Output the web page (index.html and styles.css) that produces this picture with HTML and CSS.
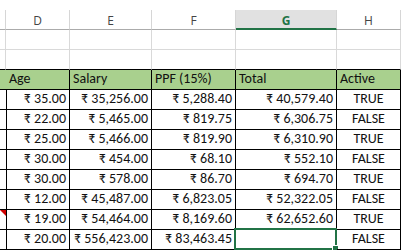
FILE: index.html
```html
<!DOCTYPE html>
<html>
<head>
<meta charset="utf-8">
<link rel="stylesheet" href="styles.css">
</head>
<body>
<div class="sheet">
  <div class="colhead"></div>
  <div class="colhead">D</div>
  <div class="colhead">E</div>
  <div class="colhead">F</div>
  <div class="colhead sel">G</div>
  <div class="colhead">H</div>

  <div class="grid"></div><div class="grid"></div><div class="grid"></div><div class="grid"></div><div class="grid"></div><div class="grid"></div>
  <div class="grid top"></div><div class="grid top"></div><div class="grid top"></div><div class="grid top"></div><div class="grid top"></div><div class="grid top"></div>

  <div class="th"></div><div class="th">Age</div><div class="th">Salary</div><div class="th">PPF (15%)</div><div class="th">Total</div><div class="th">Active</div>

  <div class="td"></div><div class="td num">₹ 35.00</div><div class="td num">₹ 35,256.00</div><div class="td num">₹ 5,288.40</div><div class="td num">₹ 40,579.40</div><div class="td bool">TRUE</div>
  <div class="td"></div><div class="td num">₹ 22.00</div><div class="td num">₹ 5,465.00</div><div class="td num">₹ 819.75</div><div class="td num">₹ 6,306.75</div><div class="td bool">FALSE</div>
  <div class="td"></div><div class="td num">₹ 25.00</div><div class="td num">₹ 5,466.00</div><div class="td num">₹ 819.90</div><div class="td num">₹ 6,310.90</div><div class="td bool">TRUE</div>
  <div class="td"></div><div class="td num">₹ 30.00</div><div class="td num">₹ 454.00</div><div class="td num">₹ 68.10</div><div class="td num">₹ 552.10</div><div class="td bool">FALSE</div>
  <div class="td"></div><div class="td num">₹ 30.00</div><div class="td num">₹ 578.00</div><div class="td num">₹ 86.70</div><div class="td num">₹ 694.70</div><div class="td bool">TRUE</div>
  <div class="td"></div><div class="td num">₹ 12.00</div><div class="td num">₹ 45,487.00</div><div class="td num">₹ 6,823.05</div><div class="td num">₹ 52,322.05</div><div class="td bool">FALSE</div>
  <div class="td"><span class="comment"></span></div><div class="td num">₹ 19.00</div><div class="td num">₹ 54,464.00</div><div class="td num">₹ 8,169.60</div><div class="td num">₹ 62,652.60</div><div class="td bool">TRUE</div>
  <div class="td"></div><div class="td num">₹ 20.00</div><div class="td num">₹ 556,423.00</div><div class="td num">₹ 83,463.45</div><div class="td num active"><span class="selbox"></span><span class="handle"></span></div><div class="td bool">FALSE</div>
</div>
</body>
</html>
```

FILE: styles.css
```css
html, body {
  margin: 0;
  padding: 0;
  background: #fff;
  overflow: hidden;
}
.sheet {
  margin-top: 10px;
  width: 401px;
  display: grid;
  grid-template-columns: 6px 64px 82px 84px 101px 64px;
  grid-auto-rows: 20px;
  font-family: Carlito, Lato, "Noto Sans", sans-serif;
  font-size: 14px;
  color: #111;
}
.sheet > div {
  box-sizing: border-box;
  position: relative;
  white-space: nowrap;
  overflow: visible;
}
.colhead {
  border-right: 1px solid #d6d6d6;
  border-bottom: 1px solid #ababab;
  font-family: "Open Sans", "Noto Sans", sans-serif;
  font-size: 12px;
  color: #444;
  display: flex;
  align-items: center;
  justify-content: center;
  padding-top: 1px;
}
.colhead.sel {
  background: #e1e1e1;
  border-bottom: 2px solid #217346;
  color: #217346;
  font-weight: bold;
  padding-top: 2px;
}
.grid {
  border-right: 1px solid #d9d9d9;
  border-bottom: 1px solid #d9d9d9;
}
.grid.top {
  border-bottom-color: #000;
}
.th, .td {
  border-right: 1px solid #000;
  border-bottom: 1px solid #000;
  display: flex;
  align-items: flex-end;
  padding: 0 3px 3px 3px;
  line-height: 15px;
}
.th {
  background: #a9d08e;
}
.num {
  justify-content: flex-end;
}
.bool {
  justify-content: center;
}
.comment {
  position: absolute;
  top: 0;
  right: 0;
  width: 0;
  height: 0;
  border-left: 6px solid transparent;
  border-top: 6px solid #d00000;
}
.selbox {
  position: absolute;
  left: -2px;
  top: -2px;
  right: -1px;
  bottom: -1px;
  border: 2px solid #217346;
}
.handle {
  position: absolute;
  right: -3px;
  bottom: -3px;
  width: 5px;
  height: 5px;
  background: #217346;
  border: 1px solid #fff;
}
```
